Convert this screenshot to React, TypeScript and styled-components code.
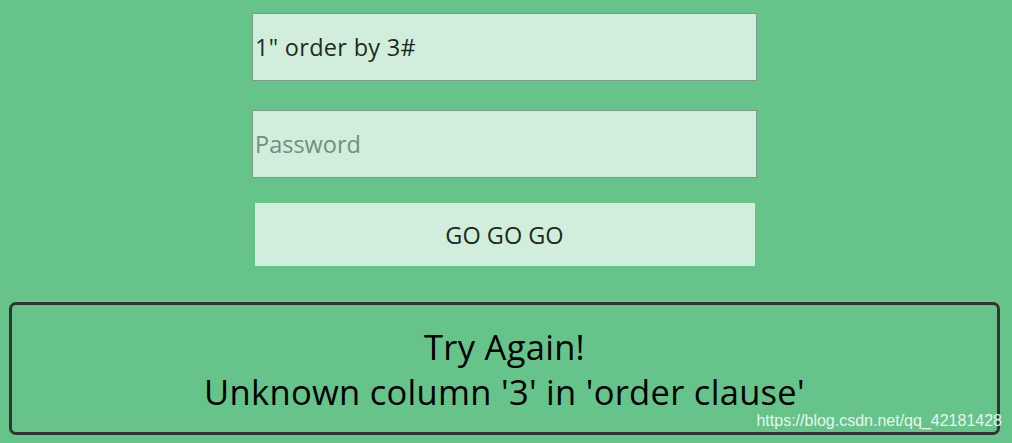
import React from "react";
import styled, { createGlobalStyle } from "styled-components";

const GlobalStyle = createGlobalStyle`
  html, body {
    margin: 0;
    padding: 0;
    background: #66c48a;
  }
  body {
    font-family: "Open Sans", "DejaVu Sans", sans-serif;
  }
`;

const Page = styled.div`
  position: relative;
  width: 1012px;
  height: 443px;
  box-sizing: border-box;
  padding: 13px 12px 0 9px;
  display: flex;
  flex-direction: column;
  align-items: center;
  overflow: hidden;
`;

const Form = styled.form`
  width: 505px;
  display: flex;
  flex-direction: column;
  align-items: center;
`;

const Field = styled.input`
  width: 505px;
  height: 68px;
  box-sizing: border-box;
  margin: 0 0 29px;
  padding: 0 2px;
  border: 1px solid #7c9c89;
  background: #d1eedc;
  color: #1c2b22;
  font-family: "Open Sans", "DejaVu Sans", sans-serif;
  font-size: 23.5px;
  letter-spacing: 0.3px;
  outline: none;

  &::placeholder {
    color: #6f8f7b;
    letter-spacing: 0;
  }

  &:last-of-type {
    margin-bottom: 25px;
  }
`;

const Submit = styled.button`
  width: 500px;
  height: 63px;
  border: none;
  background: #d1eedc;
  color: #1c2b22;
  font-family: "Open Sans", "DejaVu Sans", sans-serif;
  font-size: 23.5px;
  padding: 0;
  cursor: pointer;
`;

const Message = styled.div`
  margin-top: 36px;
  width: 991px;
  height: 133px;
  box-sizing: border-box;
  border: 3px solid #333333;
  border-radius: 7px;
  display: flex;
  flex-direction: column;
  align-items: center;
  justify-content: center;
  color: #000;
  font-family: "Open Sans", "DejaVu Sans", sans-serif;
  font-size: 34.5px;
  letter-spacing: 0.3px;
  line-height: 45px;
`;

const Watermark = styled.span`
  position: absolute;
  right: 10px;
  top: 412px;
  color: #e8f4ec;
  font-family: "Liberation Sans", Arial, sans-serif;
  font-size: 16px;
`;

export default function App() {
  return (
    <>
      <GlobalStyle />
      <Page>
        <Form onSubmit={(e) => e.preventDefault()}>
          <Field type="text" defaultValue={'1" order by 3#'} />
          <Field type="password" placeholder="Password" />
          <Submit type="submit">GO GO GO</Submit>
        </Form>
        <Message>
          <div>Try Again!</div>
          <div>Unknown column '3' in 'order clause'</div>
        </Message>
        <Watermark>https://blog.csdn.net/qq_42181428</Watermark>
      </Page>
    </>
  );
}
